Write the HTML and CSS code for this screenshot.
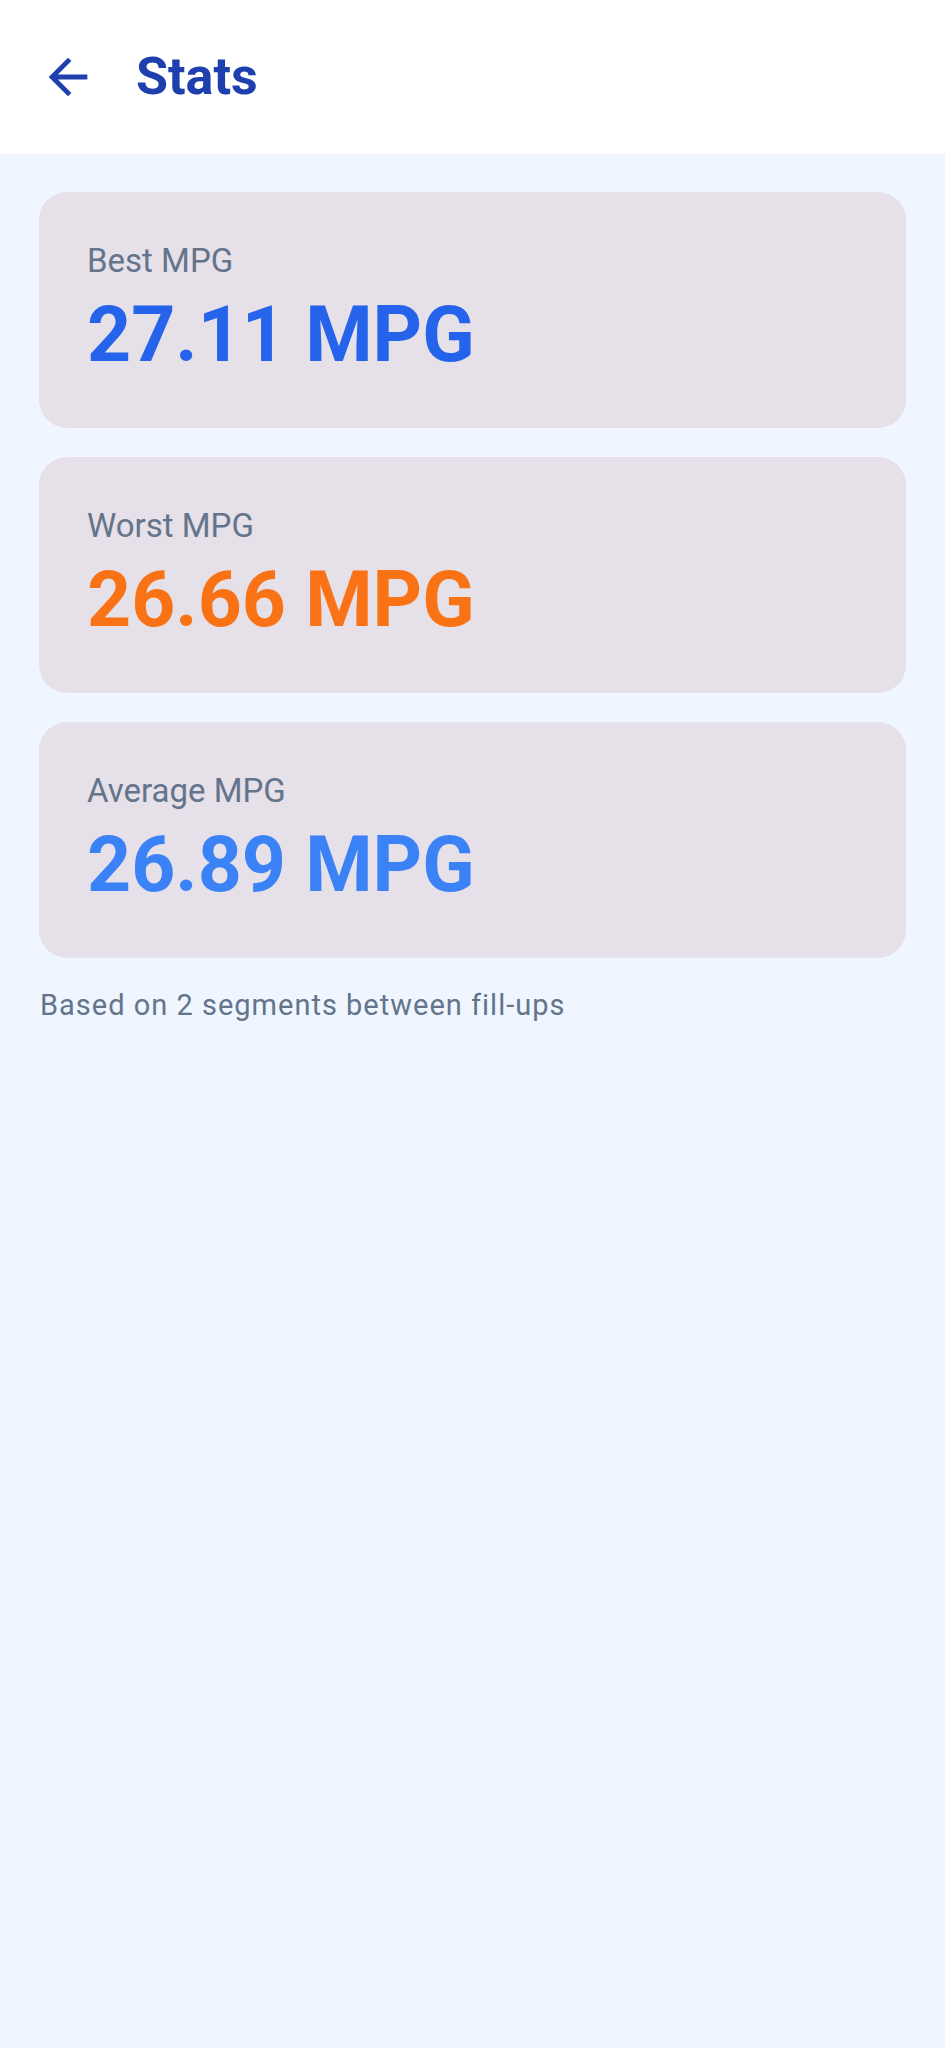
FILE: index.html
```html
<!DOCTYPE html>
<html lang="en">
<head>
    <meta charset="UTF-8">
    <meta name="viewport" content="width=device-width, initial-scale=1.0">
    <title>Stats</title>
    <link rel="stylesheet" href="styles.css">
</head>
<body>
    <header class="top-bar">
        <button class="back-button" aria-label="Back">
            <svg viewBox="0 0 24 24" width="58" height="58">
                <path d="M20 11H7.83l5.59-5.59L12 4l-8 8 8 8 1.41-1.41L7.83 13H20v-2z" fill="currentColor"/>
            </svg>
        </button>
        <h1 class="title">Stats</h1>
    </header>

    <main class="content">
        <div class="stat-card">
            <div class="stat-label">Best MPG</div>
            <div class="stat-value best">27.11 MPG</div>
        </div>
        <div class="stat-card">
            <div class="stat-label">Worst MPG</div>
            <div class="stat-value worst">26.66 MPG</div>
        </div>
        <div class="stat-card">
            <div class="stat-label">Average MPG</div>
            <div class="stat-value average">26.89 MPG</div>
        </div>
        <p class="note">Based on 2 segments between fill-ups</p>
    </main>
</body>
</html>
```

FILE: styles.css
```css
body {
    margin: 0;
    font-family: 'Roboto', 'Noto Sans', sans-serif;
    background-color: #eff6ff;
    min-height: 100vh;
}

.top-bar {
    height: 154px;
    background-color: #ffffff;
    display: flex;
    align-items: center;
    padding-left: 39px;
    gap: 39px;
}

.back-button {
    width: 58px;
    height: 58px;
    padding: 0;
    border: none;
    background: none;
    color: #1e40af;
    display: flex;
    cursor: pointer;
}

.title {
    margin: 0;
    font-size: 52px;
    line-height: 52px;
    font-weight: 700;
    color: #1e40af;
}

.content {
    padding: 38px 39px;
    display: flex;
    flex-direction: column;
    gap: 29px;
}

.stat-card {
    background-color: #e6e0e9;
    border-radius: 28px;
    padding: 49px 48px 47px;
    display: flex;
    flex-direction: column;
    gap: 10px;
}

.stat-label {
    font-size: 33px;
    line-height: 39px;
    color: #64748b;
}

.stat-value {
    font-size: 77px;
    line-height: 91px;
    font-weight: 700;
}

.stat-value.best {
    color: #2563eb;
}

.stat-value.worst {
    color: #f97316;
}

.stat-value.average {
    color: #3b82f6;
}

.note {
    margin: 1px 0 0;
    padding-left: 1px;
    font-size: 29px;
    line-height: 34px;
    letter-spacing: 1px;
    color: #64748b;
}
```
